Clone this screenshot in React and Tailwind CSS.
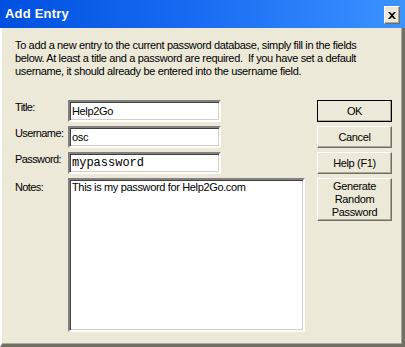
import React, { useState } from 'react';

const raised =
  'bg-[#ece9d8] border border-t-white border-l-white border-r-[#716f64] border-b-[#716f64] shadow-[inset_-1px_-1px_0_#aca899]';
const sunken =
  'bg-white border-2 border-t-[#808080] border-l-[#808080] border-r-white border-b-white shadow-[inset_1px_1px_0_#404040,inset_-1px_-1px_0_#d4d0c8]';

const Field = ({ label, value, onChange, mono }) => (
  <div className="flex h-[22px]">
    <div className="w-[53px] pt-[1px] tracking-[-0.6px]">{label}</div>
    <input
      value={value}
      onChange={(e) => onChange(e.target.value)}
      className={`${sunken} w-[153px] h-[22px] px-[2px] outline-none ${
        mono ? "font-['Liberation_Mono',monospace] text-[12px] tracking-normal" : 'tracking-[-0.35px]'
      }`}
    />
  </div>
);

const Button = ({ children, primary, tall }) => (
  <button
    className={`w-[75px] ${tall ? 'h-[43px]' : 'h-[22px]'} ${
      primary ? 'outline outline-1 outline-black -outline-offset-1' : ''
    } ${raised} text-[11px] leading-[13px] tracking-[-0.35px] text-black flex items-center justify-center`}
  >
    {children}
  </button>
);

const App = () => {
  const [entry, setEntry] = useState({
    title: 'Help2Go',
    username: 'osc',
    password: 'mypassword',
    notes: 'This is my password for Help2Go.com'
  });

  return (
    <div className="w-[405px] h-[347px] flex flex-col bg-[#ece9d8] font-['Liberation_Sans',Arial,sans-serif] text-[11px] leading-[13px] text-black">
      {/* title bar */}
      <div className="h-[28px] shrink-0 flex items-center pl-[5px] pr-[5px] bg-gradient-to-r from-[#0050e0] via-[#1a6cf2] to-[#3b93ff]">
        <span className="text-white font-bold text-[13px] leading-[16px] tracking-[0.2px]">Add Entry</span>
        <div className={`ml-auto w-[16px] h-[18px] mt-[2px] flex items-center justify-center ${raised}`}>
          <svg width="8" height="7" viewBox="0 0 8 7">
            <path d="M0 0h2l2 2 2-2h2L5 3.5 8 7H6L4 5 2 7H0l3-3.5z" fill="#000" />
          </svg>
        </div>
      </div>

      {/* body */}
      <div className="flex-1 tracking-[-0.35px] border-l-2 border-l-white border-r-[3px] border-r-[#716f64] border-b-[3px] border-b-[#716f64] shadow-[inset_-1px_-1px_0_#aca899] pl-[13px] pt-[11px]">
        <p>
          To add a new entry to the current password database, simply fill in the fields
          <br />
          below. At least a title and a password are required.&nbsp; If you have set a default
          <br />
          username, it should already be entered into the username field.
        </p>

        <div className="flex mt-[22px]">
          <div className="flex flex-col gap-[4px] w-[290px]">
            <Field label="Title:" value={entry.title} onChange={(v) => setEntry({ ...entry, title: v })} />
            <Field label="Username:" value={entry.username} onChange={(v) => setEntry({ ...entry, username: v })} />
            <Field label="Password:" value={entry.password} mono onChange={(v) => setEntry({ ...entry, password: v })} />
            <div className="flex">
              <div className="w-[53px] pt-[3px] tracking-[-0.6px]">Notes:</div>
              <textarea
                value={entry.notes}
                onChange={(e) => setEntry({ ...entry, notes: e.target.value })}
                className={`${sunken} w-[237px] h-[154px] px-[2px] py-[1px] resize-none outline-none tracking-[-0.35px]`}
              />
            </div>
          </div>

          <div className="flex flex-col gap-[4px] ml-[12px]">
            <Button primary>OK</Button>
            <Button>Cancel</Button>
            <Button>Help (F1)</Button>
            <Button tall>
              Generate
              <br />
              Random
              <br />
              Password
            </Button>
          </div>
        </div>
      </div>
    </div>
  );
};

export default App;
